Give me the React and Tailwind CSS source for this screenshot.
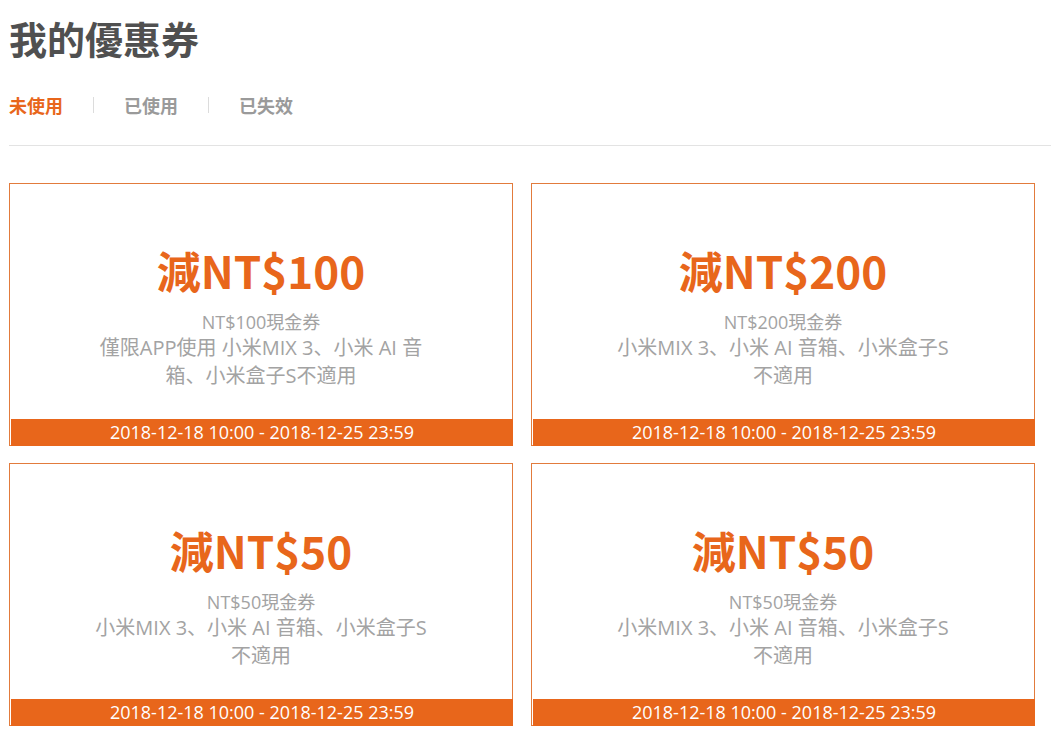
const coupons = [
  { amount: '減NT$100', name: 'NT$100現金券', desc: '僅限APP使用 小米MIX 3、小米 AI 音箱、小米盒子S不適用' },
  { amount: '減NT$200', name: 'NT$200現金券', desc: '小米MIX 3、小米 AI 音箱、小米盒子S不適用' },
  { amount: '減NT$50', name: 'NT$50現金券', desc: '小米MIX 3、小米 AI 音箱、小米盒子S不適用' },
  { amount: '減NT$50', name: 'NT$50現金券', desc: '小米MIX 3、小米 AI 音箱、小米盒子S不適用' },
];

function Coupon({ c }) {
  return (
    <div className="flex flex-col h-[263px] border border-[#e27b3c] bg-white">
      <div className="flex-1 flex flex-col items-center pt-[58px] text-center">
        <div className="text-[44px] leading-[56px] font-bold text-[#e8661b] font-['Noto_Sans_CJK_SC',sans-serif]">{c.amount}</div>
        <div className="mt-[12px] text-[18px] leading-[24px] text-[#a3a3a3]">{c.name}</div>
        <div className="w-[344px] text-[20px] leading-[28px] text-[#a3a3a3]">{c.desc}</div>
      </div>
      <div className="h-[27px] ml-[1px] -mb-px -mr-px bg-[#e8661b] text-white text-[18px] leading-[27px] text-center">
        2018-12-18 10:00 - 2018-12-25 23:59
      </div>
    </div>
  );
}

export default function App() {
  return (
    <div className="min-h-screen bg-white pl-[9px] font-['Open_Sans','Noto_Sans_CJK_SC',sans-serif]">
      <h1 className="pt-[12px] text-[38px] leading-[52px] font-bold text-[#505050] font-['Noto_Sans_CJK_SC',sans-serif]">我的優惠券</h1>
      <div className="flex items-center mt-[29px] h-[24px] text-[18px] font-bold font-['Noto_Sans_CJK_SC',sans-serif]">
        <span className="text-[#e8661b]">未使用</span>
        <span className="mx-[30px] w-px h-[16px] bg-[#dcdcdc]" />
        <span className="text-[#9a9a9a]">已使用</span>
        <span className="mx-[30px] w-px h-[16px] bg-[#dcdcdc]" />
        <span className="text-[#9a9a9a]">已失效</span>
      </div>
      <div className="mt-[28px] h-px bg-[#e3e3e3]" />
      <div className="mt-[37px] grid grid-cols-[504px_504px] gap-x-[18px] gap-y-[17px]">
        {coupons.map((c, i) => <Coupon key={i} c={c} />)}
      </div>
    </div>
  );
}
